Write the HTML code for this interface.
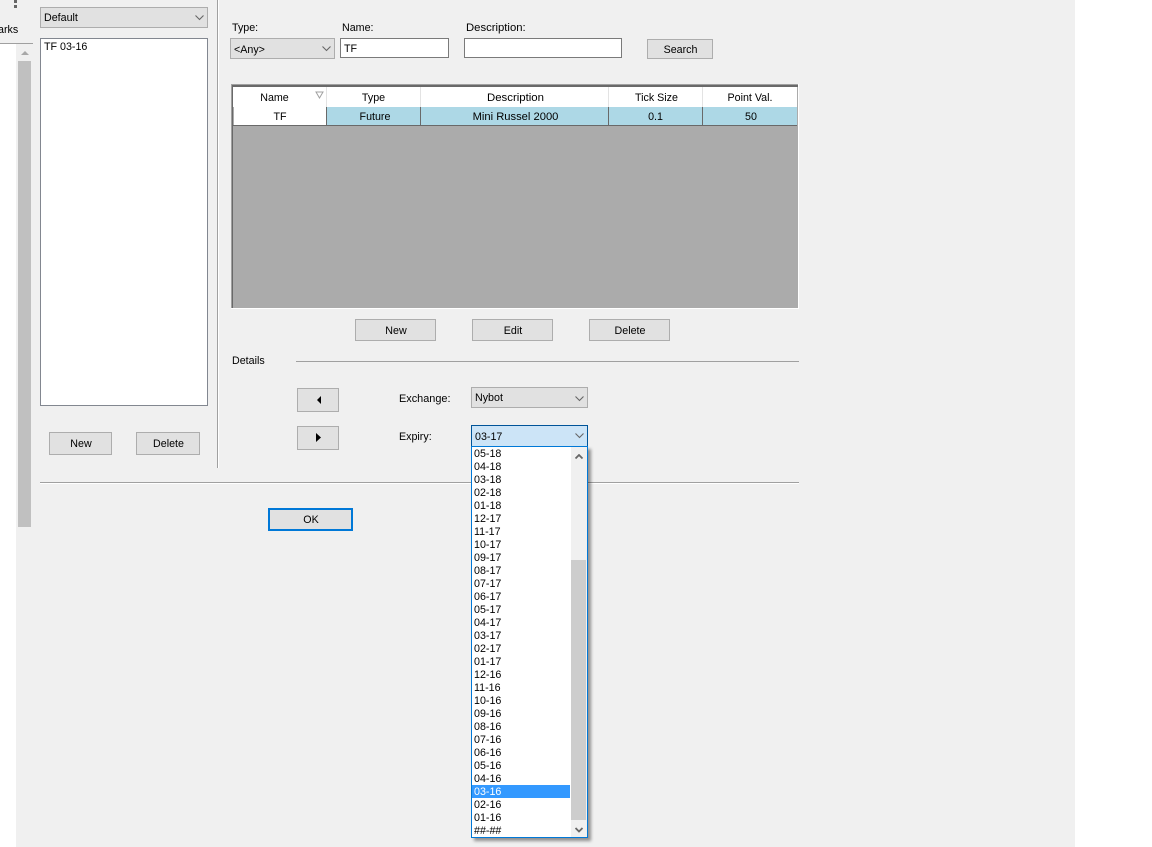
<!DOCTYPE html>
<html><head><meta charset="utf-8"><title>Instruments</title>
<style>
html,body{margin:0;padding:0;background:#fff;}
#p{position:relative;width:1152px;height:847px;overflow:hidden;background:#fff;font:10.7px/13px "Liberation Sans",sans-serif;color:#000;}
#p div{position:absolute;box-sizing:border-box;}
.t{white-space:nowrap;padding-top:1px;}
.b{background:#e1e1e1;border:1px solid #adadad;text-align:center;padding-left:1px;}
.c{background:#e1e1e1;border:1px solid #adadad;padding-left:3px;}
.i{background:#fff;border:1px solid #7a7a7a;padding-left:3px;}
.h{text-align:center;line-height:22px;height:20px;top:87px;}
.r{text-align:center;line-height:20px;height:18px;top:107px;background:#add8e6;border-right:1px solid #696969;}
.o{left:2px;height:13px;width:98px;line-height:13px;}
svg{position:absolute;display:block;}
</style></head><body><div id="p">
<div style="left:16px;top:0;width:1059px;height:847px;background:#f0f0f0"></div>
<div style="left:0;top:0;width:33px;height:44px;background:#f0f0f0"></div>
<div style="left:0;top:43px;width:33px;height:1px;background:#a0a0a0"></div>
<div style="left:14px;top:0;width:3px;height:3px;background:#666"></div>
<div style="left:14px;top:5px;width:3px;height:3px;background:#666"></div>
<div class="t" style="left:-2px;top:23px;width:24px;direction:rtl;text-align:left">arks</div>
<div style="left:18px;top:61px;width:13px;height:466px;background:#c0c0c0"></div>
<svg style="left:21px;top:50px" width="8" height="5"><path d="M0 5L4 1L8 5Z" fill="#a8a8a8"/></svg>

<div class="c" style="left:40px;top:7px;width:168px;height:21px;line-height:21px">Default</div>
<svg style="left:195px;top:15px" width="9" height="6"><path d="M.5 .5L4.500 4.500L8.500 .5" fill="none" stroke="#666" stroke-width="1.1"/></svg>
<div style="left:40px;top:38px;width:168px;height:368px;background:#fff;border:1px solid #828790"></div>
<div class="t" style="left:44px;top:40px">TF 03-16</div>
<div class="b" style="left:49px;top:432px;width:63px;height:23px;line-height:23px">New</div>
<div class="b" style="left:136px;top:432px;width:64px;height:23px;line-height:23px">Delete</div>
<div style="left:217px;top:0;width:1px;height:468px;background:#a0a0a0"></div>
<div style="left:218px;top:0;width:1px;height:468px;background:#fff"></div>
<div style="left:40px;top:482px;width:759px;height:1px;background:#a0a0a0"></div>
<div style="left:40px;top:483px;width:759px;height:1px;background:#fff"></div>

<div class="t" style="left:232px;top:21px">Type:</div>
<div class="t" style="left:342px;top:21px">Name:</div>
<div class="t" style="left:466px;top:21px;font-size:11.3px">Description:</div>
<div class="c" style="left:230px;top:38px;width:105px;height:21px;line-height:22px">&lt;Any&gt;</div>
<svg style="left:322px;top:46px" width="9" height="6"><path d="M.5 .5L4.500 4.500L8.500 .5" fill="none" stroke="#666" stroke-width="1.1"/></svg>
<div class="i" style="left:340px;top:38px;width:109px;height:20px;line-height:20px">TF</div>
<div class="i" style="left:464px;top:38px;width:158px;height:20px"></div>
<div class="b" style="left:647px;top:39px;width:66px;height:20px;line-height:20px">Search</div>

<div style="left:231px;top:84px;width:568px;height:225px;background:#fff"></div>
<div style="left:231px;top:84px;width:567px;height:224px;background:#ababab"></div>
<div style="left:231px;top:84px;width:567px;height:1px;background:#a0a0a0"></div>
<div style="left:231px;top:85px;width:567px;height:2px;background:#696969"></div>
<div style="left:231px;top:84px;width:1px;height:224px;background:#a0a0a0"></div>
<div style="left:232px;top:85px;width:1px;height:223px;background:#696969"></div>
<div style="left:233px;top:87px;width:564px;height:20px;background:#fff"></div>
<div class="h" style="left:234px;width:81px">Name</div>
<svg style="left:315px;top:91px" width="9" height="8"><path d="M1 1H8L4.500 7Z" fill="none" stroke="#a0a0a0"/></svg>
<div class="h" style="left:327px;width:93px">Type</div>
<div class="h" style="left:422px;width:187px;font-size:11.4px">Description</div>
<div class="h" style="left:610px;width:93px">Tick Size</div>
<div class="h" style="left:703px;width:94px">Point Val.</div>
<div style="left:326px;top:87px;width:1px;height:20px;background:#e3e3e3"></div>
<div style="left:420px;top:87px;width:1px;height:20px;background:#e3e3e3"></div>
<div style="left:608px;top:87px;width:1px;height:20px;background:#e3e3e3"></div>
<div style="left:702px;top:87px;width:1px;height:20px;background:#e3e3e3"></div>
<div style="left:233px;top:125px;width:564px;height:1px;background:#696969"></div>
<div class="h" style="left:234px;top:107px;width:93px;height:18px;line-height:20px;background:#fff;border-right:1px solid #696969">TF</div>
<div class="r" style="left:327px;width:94px;padding-left:3px">Future</div>
<div class="r" style="left:421px;width:188px;font-size:11.2px;padding-left:2px">Mini Russel 2000</div>
<div class="r" style="left:609px;width:94px">0.1</div>
<div class="r" style="left:703px;width:94px;border-right:0;padding-left:2px">50</div>

<div class="b" style="left:355px;top:319px;width:81px;height:22px;line-height:22px">New</div>
<div class="b" style="left:472px;top:319px;width:81px;height:22px;line-height:22px">Edit</div>
<div class="b" style="left:589px;top:319px;width:81px;height:22px;line-height:22px">Delete</div>
<div class="t" style="left:232px;top:354px">Details</div>
<div style="left:296px;top:361px;width:503px;height:1px;background:#a0a0a0"></div>
<div class="b" style="left:297px;top:388px;width:42px;height:24px"></div>
<svg style="left:316px;top:396px" width="6" height="8"><path d="M5 0V8L1 4Z" fill="#000"/></svg>
<div class="b" style="left:297px;top:426px;width:42px;height:24px"></div>
<svg style="left:316px;top:433px" width="6" height="9"><path d="M0 0V9L5 4.500Z" fill="#000"/></svg>
<div class="t" style="left:399px;top:392px;font-size:10.9px">Exchange:</div>
<div class="t" style="left:399px;top:430px">Expiry:</div>
<div class="c" style="left:471px;top:387px;width:117px;height:21px;line-height:21px">Nybot</div>
<svg style="left:575px;top:396px" width="9" height="6"><path d="M.5 .5L4.500 4.500L8.500 .5" fill="none" stroke="#666" stroke-width="1.1"/></svg>
<div class="c" style="left:471px;top:425px;width:117px;height:22px;line-height:22px;background:#cce4f7;border-color:#005499">03-17</div>
<svg style="left:575px;top:433px" width="9" height="6"><path d="M.5 .5L4.500 4.500L8.500 .5" fill="none" stroke="#666" stroke-width="1.1"/></svg>

<div class="b" style="left:268px;top:508px;width:85px;height:23px;line-height:21px;border:2px solid #0078d7">OK</div>

<div style="left:471px;top:446px;width:117px;height:392px;background:#fff;border:1px solid #0078d7;box-shadow:3px 3px 3px rgba(0,0,0,.4)">
<div style="left:99px;top:0;width:16px;height:390px;background:#f0f0f0"></div>
<div style="left:99px;top:113px;width:15px;height:260px;background:#cdcdcd"></div>
<svg style="left:103px;top:7px" width="9" height="6"><path d="M.5 4.500L4 1L7.500 4.500" fill="none" stroke="#666" stroke-width="1.800"/></svg>
<svg style="left:103px;top:380px" width="9" height="6"><path d="M.5 1L4 4.500L7.500 1" fill="none" stroke="#666" stroke-width="1.800"/></svg>
<div style="left:0;top:338px;width:98px;height:13px;background:#3399ff"></div>
<div class="t o" style="top:0">05-18</div>
<div class="t o" style="top:13px">04-18</div>
<div class="t o" style="top:26px">03-18</div>
<div class="t o" style="top:39px">02-18</div>
<div class="t o" style="top:52px">01-18</div>
<div class="t o" style="top:65px">12-17</div>
<div class="t o" style="top:78px">11-17</div>
<div class="t o" style="top:91px">10-17</div>
<div class="t o" style="top:104px">09-17</div>
<div class="t o" style="top:117px">08-17</div>
<div class="t o" style="top:130px">07-17</div>
<div class="t o" style="top:143px">06-17</div>
<div class="t o" style="top:156px">05-17</div>
<div class="t o" style="top:169px">04-17</div>
<div class="t o" style="top:182px">03-17</div>
<div class="t o" style="top:195px">02-17</div>
<div class="t o" style="top:208px">01-17</div>
<div class="t o" style="top:221px">12-16</div>
<div class="t o" style="top:234px">11-16</div>
<div class="t o" style="top:247px">10-16</div>
<div class="t o" style="top:260px">09-16</div>
<div class="t o" style="top:273px">08-16</div>
<div class="t o" style="top:286px">07-16</div>
<div class="t o" style="top:299px">06-16</div>
<div class="t o" style="top:312px">05-16</div>
<div class="t o" style="top:325px">04-16</div>
<div class="t o" style="top:338px;color:#fff">03-16</div>
<div class="t o" style="top:351px">02-16</div>
<div class="t o" style="top:364px">01-16</div>
<div class="t o" style="top:377px">##-##</div>
</div>
</div></body></html>
